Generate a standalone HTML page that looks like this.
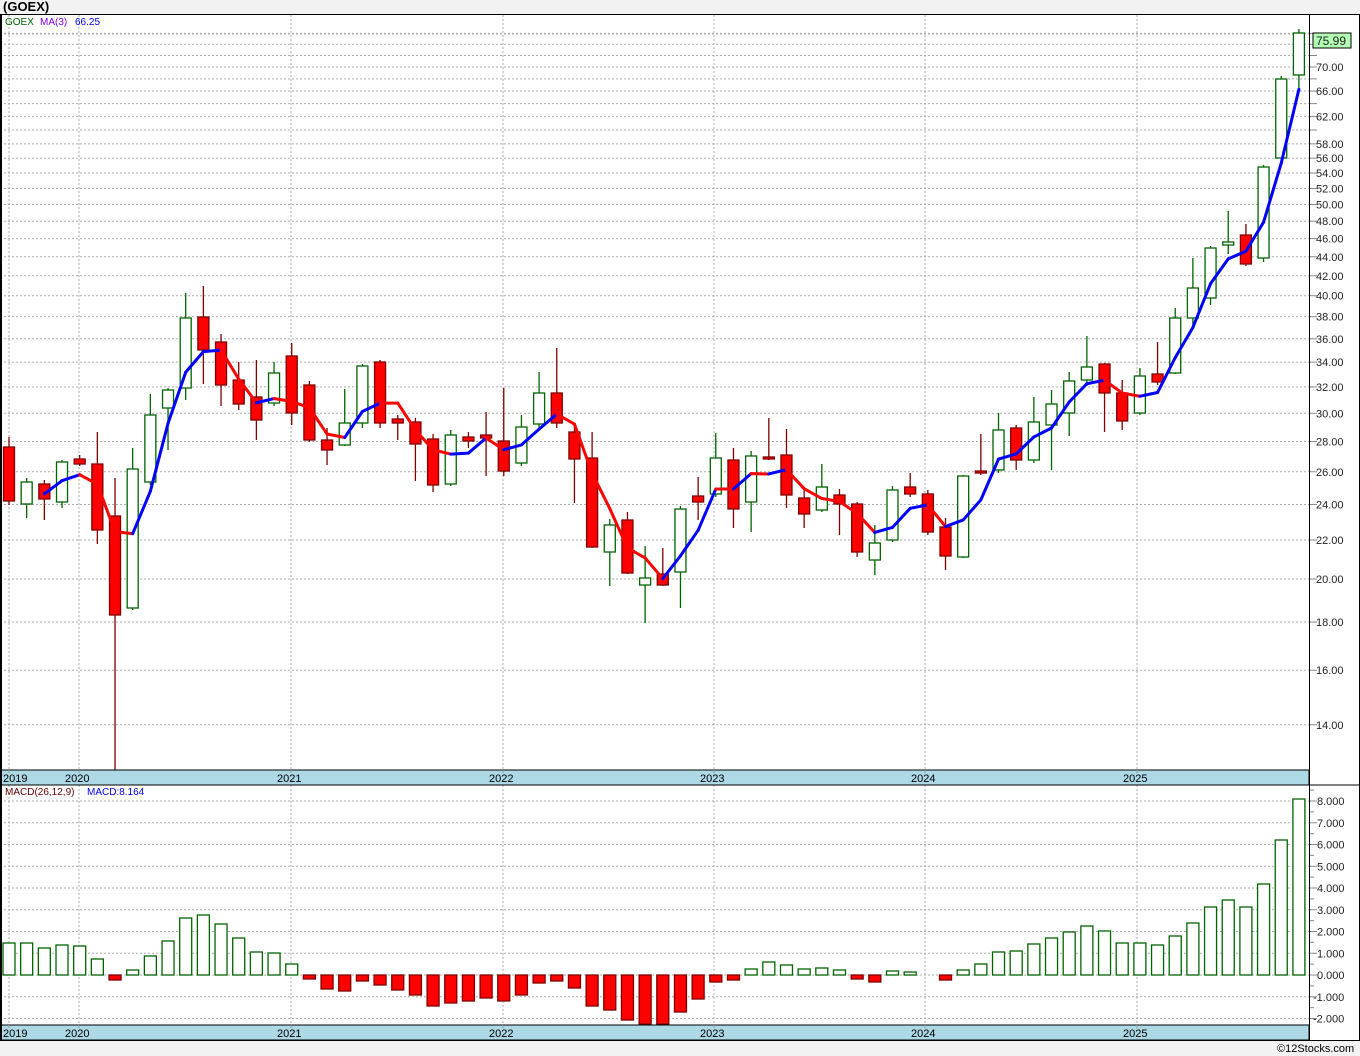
<!DOCTYPE html>
<html><head><meta charset="utf-8"><style>
html,body{margin:0;padding:0;background:#f2f2f2;}
svg{display:block;font-family:"Liberation Sans","DejaVu Sans",sans-serif;}
</style></head><body>
<svg id="s" width="1360" height="1056" xmlns="http://www.w3.org/2000/svg"></svg>
<script>
const s=document.getElementById('s');
let h='';
h+='<rect x="0" y="0" width="1360" height="1056" fill="#f2f2f2"/>';
h+='<text x="3" y="11" font-size="13" font-weight="bold" fill="#000">(GOEX)</text>';
h+='<rect x="0" y="14" width="1360" height="1027" fill="#fff"/>';
const py=p=>579-408.7*Math.log(p/20);
const yp=y=>20*Math.exp((579-y)/408.7);
let lv=[];for(let p=14;p<=76;p+=2)lv.push(p);
lv.forEach(p=>{const y=py(p);if(y<20||y>768)return;
 h+=`<line x1="0" y1="${y}" x2="1309" y2="${y}" stroke="#aaa" stroke-dasharray="2,2"/>`;
 h+=`<line x1="1309" y1="${y}" x2="1317" y2="${y}" stroke="#888"/>`;});
const lab=[70,66,62,58,56,54,52,50,48,46,44,42,40,38,36,34,32,30,28,26,24,22,20,18,16,14];
lab.forEach(p=>{const y=py(p);h+=`<text x="1316" y="${y+4}" font-size="11" fill="#222">${p.toFixed(2)}</text>`;});
h+='<line x1="0" y1="34" x2="1309" y2="34" stroke="#aaa" stroke-dasharray="2,2"/>';
h+='<rect x="1313" y="33" width="38" height="15" fill="#b3ffb3" stroke="#000"/>';
h+='<text x="1316" y="45" font-size="12" fill="#222">75.99</text>';
const yrs=[[9,'2019'],[79,'2020'],[291,'2021'],[503,'2022'],[714,'2023'],[925,'2024'],[1137,'2025']];
yrs.forEach(([x])=>{h+=`<line x1="${x}" y1="15" x2="${x}" y2="770" stroke="#aaa" stroke-dasharray="2,2"/>`;
 h+=`<line x1="${x}" y1="785" x2="${x}" y2="1025" stroke="#aaa" stroke-dasharray="2,2"/>`;});
const C=[
['r',447,501,437,505],['u',504,482,478,518],['r',484,499,480,520],['u',502,462,460,508],['r',459,464,455,466],
['r',464,530,432,544],['r',516,615,478,770],['u',608,469,448,610],['u',482,415,394,485],['u',408,390,388,450],
['u',388,318,293,400],['r',317,350,286,384],['r',342,385,334,406],['r',380,404,362,410],['r',397,420,360,440],
['u',403,373,362,406],['r',356,413,343,425],['r',385,440,381,442],['r',440,450,428,465],['u',445,423,389,446],
['u',423,366,364,428],['r',362,423,360,428],['r',419,423,415,440],['r',422,444,418,481],['r',439,485,434,492],
['u',484,435,430,486],['r',437,441,432,448],['r',435,438,412,476],['r',441,471,388,476],['u',463,427,415,466],
['u',424,393,372,428],['r',393,423,348,428],['r',432,459,426,503],['r',458,547,432,548],['u',552,525,519,586],
['r',520,573,512,574],['u',585,578,546,623],['r',574,585,548,586],['u',572,509,506,608],['r',496,502,477,520],
['u',494,458,433,497],['r',460,509,448,528],['u',502,456,451,532],['r',457,459,418,460],['r',455,495,429,508],
['r',498,514,488,528],['u',510,487,464,512],['r',495,504,489,535],['r',504,552,502,557],['u',560,543,525,575],
['u',540,490,486,542],['r',487,494,473,497],['r',494,532,490,535],['r',527,556,518,570],['u',557,476,475,558],
['r',471,473,434,475],['u',470,430,413,473],['r',428,460,425,470],['u',460,422,397,463],['u',425,404,390,470],
['u',413,381,372,436],['u',380,367,336,386],['r',364,393,363,432],['r',393,421,380,430],['u',413,376,368,415],
['r',374,382,342,385],['u',373,318,308,374],['u',318,288,258,325],['u',298,248,246,305],['u',245,242,211,254],
['r',235,264,224,266],['u',258,167,165,262],['u',158,79,76,160],['u',75,33,29,88]];
const X=i=>9+i*17.67;
C.forEach((c,i)=>{const x=X(i);const [t,o,cl,hi,lo]=c;const top=Math.min(o,cl),bot=Math.max(o,cl);
 const col=t=='u'?'#006400':'#800000';
 h+=`<line x1="${x}" y1="${hi}" x2="${x}" y2="${lo}" stroke="${col}" stroke-width="1.3"/>`;
 h+=`<rect x="${x-5.5}" y="${top}" width="11" height="${Math.max(bot-top,2)}" fill="${t=='u'?'#fff':'#f00'}" stroke="${col}" stroke-width="1.3"/>`;});
const cl=C.map(c=>yp(c[2]));
let pts=[];for(let i=2;i<C.length;i++){pts.push([X(i),py((cl[i]+cl[i-1]+cl[i-2])/3)]);}
for(let i=1;i<pts.length;i++){const [a,b]=[pts[i-1],pts[i]];const col=b[1]<a[1]?'#0000ff':'#ff0000';
 h+=`<line x1="${a[0]}" y1="${a[1]}" x2="${b[0]}" y2="${b[1]}" stroke="${col}" stroke-width="3" stroke-linecap="round"/>`;}
h+='<text x="5" y="25" font-size="10" fill="#006400">GOEX</text><text x="40" y="25" font-size="10" fill="#8000ff">MA(3)</text><text x="75" y="25" font-size="10" fill="#0000ff">66.25</text>';
const zy=975,u=21.75;
for(let v=-2;v<=8;v++){const y=zy-v*u;h+=`<line x1="0" y1="${y}" x2="1309" y2="${y}" stroke="#aaa" stroke-dasharray="2,2"/>`;
 h+=`<line x1="1309" y1="${y}" x2="1317" y2="${y}" stroke="#888"/><line x1="1309" y1="${y-u/2}" x2="1314" y2="${y-u/2}" stroke="#888"/>`;
 h+=`<text x="${v<0?1313:1317}" y="${y+4}" font-size="11" fill="#222">${v.toFixed(3)}</text>`;}
const M=[943,943,948,945,946,959,980,970,956,941,918,915,924,938,952,953,964,979,989,991,981,985,990,995,1006,1003,1001,998,1001,995,983,981,988,1006,1010,1020,1024,1024,1012,999,982,980,969,962,965,969,968,970,979,982,971,972,975,980,970,964,952,951,944,938,932,926,931,943,943,945,936,923,907,900,907,884,840,799];
M.forEach((y,i)=>{const x=X(i);if(y<zy)h+=`<rect x="${x-6}" y="${y}" width="12" height="${zy-y}" fill="#fff" stroke="#006400" stroke-width="1.3"/>`;
 else if(y>zy)h+=`<rect x="${x-6}" y="${zy}" width="12" height="${y-zy}" fill="#f00" stroke="#800000" stroke-width="1.3"/>`;});
h+='<text x="5" y="795" font-size="10" fill="#600">MACD(26,12,9)</text><text x="87" y="795" font-size="10" fill="#0000ff">MACD:8.164</text>';
[[770,785],[1025,1040]].forEach(([a,b])=>{h+=`<rect x="0" y="${a}" width="1309" height="${b-a}" fill="#add8e6" stroke="#000"/>`;
 yrs.forEach(([x,t])=>{h+=`<line x1="${x}" y1="${a}" x2="${x}" y2="${a+3}" stroke="#999"/><text x="${x==9?3:x-14}" y="${b-3}" font-size="11" fill="#000">${t}</text>`;});});
h+='<line x1="0" y1="14.5" x2="1360" y2="14.5" stroke="#000"/>';
h+='<line x1="0" y1="785" x2="1360" y2="785" stroke="#000"/>';
h+='<line x1="0" y1="1040.5" x2="1360" y2="1040.5" stroke="#000"/>';
h+='<line x1="1309.5" y1="14" x2="1309.5" y2="1041" stroke="#000"/>';
h+='<line x1="1" y1="14" x2="1" y2="1041" stroke="#000" stroke-width="2"/>';
h+='<line x1="1359.5" y1="14" x2="1359.5" y2="1041" stroke="#000"/>';
h+='<text x="1277" y="1052" font-size="11" fill="#000">©12Stocks.com</text>';
s.innerHTML=h;
</script>
</body></html>
